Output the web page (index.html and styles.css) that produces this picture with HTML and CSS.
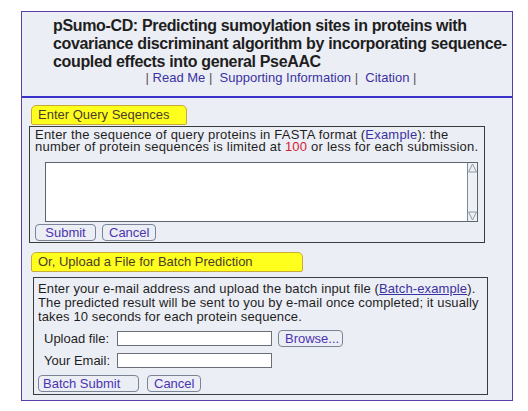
FILE: index.html
```html
<!DOCTYPE html>
<html lang="en">

<head>
  <meta charset="UTF-8">
  <title>pSumo-CD</title>
  <link rel="stylesheet" href="styles.css">
</head>

<body>
  <div class="page">
    <div class="header">
      <h1>pSumo-CD: Predicting sumoylation sites in proteins with covariance discriminant algorithm by incorporating sequence-coupled effects into general PseAAC</h1>
      <div class="links">| <a href="#">Read Me</a> | &nbsp;<a href="#">Supporting Information</a> | &nbsp;<a href="#">Citation</a> |</div>
    </div>

    <div class="tab tab-query">Enter Query Seqences</div>
    <form class="box box-query">
      <p class="info">Enter the sequence of query proteins in FASTA format (<a href="#">Example</a>): the number of protein sequences is limited at <span class="red">100</span> or less for each submission.</p>
      <div class="seq">
        <div class="seq-area"></div>
        <div class="scroll">
          <svg width="9" height="10" viewBox="0 0 9 10"><path d="M0.5 9 L4.5 1 L8.5 9 Z" fill="none" stroke="#8a9aa8" stroke-width="1"/></svg>
          <svg width="9" height="10" viewBox="0 0 9 10"><path d="M0.5 1 L4.5 9 L8.5 1 Z" fill="none" stroke="#8a9aa8" stroke-width="1"/></svg>
        </div>
      </div>
      <div class="buttons">
        <button type="button" class="btn btn-submit">Submit</button>
        <button type="button" class="btn btn-cancel">Cancel</button>
      </div>
    </form>

    <div class="tab tab-batch">Or, Upload a File for Batch Prediction</div>
    <form class="box box-batch">
      <p class="info">Enter your e-mail address and upload the batch input file (<a href="#" class="ul">Batch-example</a>). The predicted result will be sent to you by e-mail once completed; it usually takes 10 seconds for each protein sequence.</p>
      <div class="row row-first">
        <label>Upload file:</label>
        <span class="field"></span>
        <button type="button" class="btn btn-browse">Browse...</button>
      </div>
      <div class="row">
        <label>Your Email:</label>
        <span class="field"></span>
      </div>
      <div class="buttons">
        <button type="button" class="btn btn-batch">Batch Submit</button>
        <button type="button" class="btn btn-cancel2">Cancel</button>
      </div>
    </form>
  </div>
</body>

</html>
```

FILE: styles.css
```css
body {
  margin: 0;
  background-color: #ffffff;
  font-family: "Liberation Sans", Arial, sans-serif;
  color: #222222;
}

.page {
  width: 490px;
  margin: 11px 0 0 21px;
  padding-bottom: 5px;
  border: 1px solid #5b3fa6;
  background-color: #eceef5;
}

.header {
  padding: 5px 3px 11px 31px;
  border-bottom: 2px solid #3b30c8;
}

h1 {
  margin: 0;
  font-size: 16px;
  line-height: 18px;
  font-weight: bold;
  letter-spacing: -0.35px;
  color: #1e1e1e;
}

.links {
  text-align: center;
  font-size: 13px;
  line-height: 14px;
  color: #555555;
}

a {
  color: #3a32a0;
  text-decoration: none;
}

a.ul {
  text-decoration: underline;
}

/* Yellow tab headings */
.tab {
  margin-left: 9px;
  height: 18px;
  padding-left: 6px;
  font-size: 13px;
  line-height: 18px;
  color: #4a3c2a;
  background-color: #ffff1e;
  border: 1px solid #c9a93a;
  border-radius: 5px 5px 2px 2px;
}

.tab-query {
  margin-top: 7px;
  width: 148px;
}

.tab-batch {
  margin-top: 9px;
  width: 264px;
}

.box {
  border: 1px solid #3b3b3b;
  background-color: #eceef5;
}

.box-query {
  width: 449px;
  margin: 1px 0 0 7px;
  padding: 2px 0 1px 5px;
}

.box-batch {
  width: 449px;
  margin: 5px 0 0 11px;
  padding: 4px 0 2px 4px;
}

.info {
  margin: 0;
  font-size: 13px;
  line-height: 12px;
  letter-spacing: 0.22px;
  color: #1e1e1e;
}

.box-batch .info {
  line-height: 14px;
  letter-spacing: 0.12px;
}

.red {
  color: #d42030;
}

.seq {
  display: flex;
  width: 431px;
  height: 58px;
  margin: 9px 0 2px 10px;
  border: 1px solid #5e6470;
  background-color: #ffffff;
}

.seq-area {
  flex: 1;
}

.scroll {
  width: 9px;
  display: flex;
  flex-direction: column;
  justify-content: space-between;
  border-left: 1px solid #7c8ca0;
  background-color: #eef1f4;
}

.scroll svg {
  display: block;
}

.buttons {
  display: flex;
  gap: 6px;
}

.btn {
  height: 17px;
  padding: 0 6px;
  font-family: "Liberation Sans", Arial, sans-serif;
  font-size: 13px;
  line-height: 15px;
  color: #4a34b0;
  background-color: #eceef5;
  border: 1px solid #7a8494;
  border-radius: 4px;
}

.btn-submit {
  width: 61px;
}

.btn-cancel {
  width: 54px;
}

.row {
  display: flex;
  align-items: center;
  gap: 4px;
  height: 22px;
  margin-left: 6px;
}

.row-first {
  margin-top: 3px;
}

.row label {
  width: 69px;
  font-size: 13px;
  color: #1e1e1e;
}

.field {
  display: block;
  width: 153px;
  height: 13px;
  background-color: #ffffff;
  border: 1px solid #6a6e78;
}

.btn-browse {
  width: 65px;
  margin-left: 2px;
}

.box-batch .buttons {
  gap: 8px;
  margin-top: 4px;
}

.btn-batch {
  width: 101px;
  text-align: left;
  padding-left: 4px;
}

.btn-cancel2 {
  width: 54px;
}
```
